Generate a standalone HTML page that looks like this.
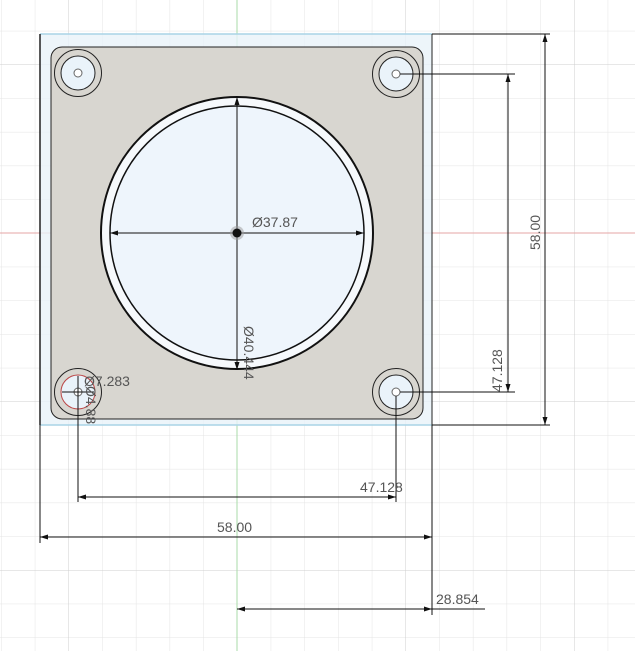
<!DOCTYPE html>
<html><head><meta charset="utf-8"><style>
html,body{margin:0;padding:0;background:#fff;}
svg{display:block;}
text{font-family:"Liberation Sans",sans-serif;font-size:14px;fill:#555;}
</style></head><body>
<svg width="635" height="651" viewBox="0 0 635 651" xmlns="http://www.w3.org/2000/svg">
<defs>
<pattern id="g" x="237" y="233" width="33.7" height="33.7" patternUnits="userSpaceOnUse">
<path d="M0 0V33.7M0 0H33.7" stroke="#e4e4e4" stroke-width="1" fill="none"/>
</pattern>
<pattern id="G" x="237" y="233" width="168.5" height="168.5" patternUnits="userSpaceOnUse">
<path d="M0 0V168.5M0 0H168.5" stroke="#cfcfcf" stroke-width="1" fill="none"/>
</pattern>
</defs>
<rect width="635" height="651" fill="url(#g)"/>
<rect width="635" height="651" fill="url(#G)"/>
<line x1="0" y1="233" x2="635" y2="233" stroke="#e5a5a5" stroke-width="1"/>
<line x1="237" y1="0" x2="237" y2="651" stroke="#a8dba8" stroke-width="1"/>
<!-- plate -->
<rect x="40" y="34" width="392" height="391" fill="#e9f3f9" fill-opacity="0.8"/>
<line x1="40" y1="34" x2="432" y2="34" stroke="#a9d3e6" stroke-width="1.5"/>
<line x1="40" y1="425" x2="432" y2="425" stroke="#a9d3e6" stroke-width="1.5"/>
<line x1="40" y1="34" x2="40" y2="425" stroke="#222" stroke-width="1.5"/>
<line x1="432" y1="34" x2="432" y2="425" stroke="#222" stroke-width="1"/>
<rect x="51" y="47" width="372" height="372" rx="11" fill="#d8d6d0" stroke="#222" stroke-width="1"/>
<!-- big circle -->
<circle cx="237" cy="233" r="136" fill="#f6f9fc" stroke="#111" stroke-width="2"/>
<circle cx="237" cy="233" r="127" fill="#eef5fc" stroke="#111" stroke-width="1.5"/>
<!-- holes -->
<g fill="#eaf3fa" stroke="#222" stroke-width="1">
<circle cx="78" cy="73" r="23.5" fill="#d8d6d0"/><circle cx="78" cy="73" r="17"/><circle cx="78" cy="73" r="4" fill="#fff" stroke="#666"/>
<circle cx="396" cy="74" r="23.5" fill="#d8d6d0"/><circle cx="396" cy="74" r="17"/><circle cx="396" cy="74" r="4" fill="#fff" stroke="#666"/>
<circle cx="78" cy="392" r="23.5" fill="#d8d6d0"/><circle cx="78" cy="392" r="17" stroke="#b44"/><circle cx="78" cy="392" r="4" fill="#fff" stroke="#666"/>
<circle cx="396" cy="392" r="23.5" fill="#d8d6d0"/><circle cx="396" cy="392" r="17"/><circle cx="396" cy="392" r="4" fill="#fff" stroke="#666"/>
</g>
<!-- dimension lines -->
<g stroke="#111" stroke-width="1" fill="none">
<line x1="110" y1="233" x2="364" y2="233"/>
<line x1="237" y1="97" x2="237" y2="370"/>
<line x1="432" y1="34" x2="550" y2="34"/>
<line x1="432" y1="425" x2="550" y2="425"/>
<line x1="545" y1="34" x2="545" y2="425"/>
<line x1="400" y1="74" x2="515" y2="74"/>
<line x1="400" y1="392" x2="515" y2="392"/>
<line x1="508" y1="74" x2="508" y2="392"/>
<line x1="40" y1="425" x2="40" y2="543"/>
<line x1="78" y1="396" x2="78" y2="502"/>
<line x1="396" y1="396" x2="396" y2="502"/>
<line x1="432" y1="425" x2="432" y2="615"/>
<line x1="78" y1="497" x2="396" y2="497"/>
<line x1="40" y1="537" x2="432" y2="537"/>
<line x1="237" y1="609" x2="485" y2="609"/>
<line x1="62" y1="392" x2="94" y2="392"/>
<line x1="78" y1="376" x2="78" y2="408"/>
</g>
<g fill="#111">
<path d="M110 233l8-2.5v5z"/><path d="M364 233l-8-2.5v5z"/>
<path d="M237 97l-2.5 8h5z"/><path d="M237 370l-2.5-8h5z"/>
<path d="M545 34l-2.5 8h5z"/><path d="M545 425l-2.5-8h5z"/>
<path d="M508 74l-2.5 8h5z"/><path d="M508 392l-2.5-8h5z"/>
<path d="M78 497l8-2.5v5z"/><path d="M396 497l-8-2.5v5z"/>
<path d="M40 537l8-2.5v5z"/><path d="M432 537l-8-2.5v5z"/>
<path d="M237 609l8-2.5v5z"/><path d="M432 609l-8-2.5v5z"/>
<circle cx="237" cy="233" r="7" fill="#999" fill-opacity="0.5"/><circle cx="237" cy="233" r="4.5"/>
</g>
<text x="252" y="227">Ø37.87</text>
<text transform="translate(244,326) rotate(90)">Ø40.444</text>
<text transform="translate(540,250) rotate(-90)">58.00</text>
<text transform="translate(502,392) rotate(-90)">47.128</text>
<text x="360" y="492">47.128</text>
<text x="217" y="532">58.00</text>
<text x="436" y="604">28.854</text>
<text x="84" y="386" fill="#777">Ø7.283</text>
<text transform="translate(86,386) rotate(90)" fill="#777">Ø4.88</text>
</svg>
</body></html>
